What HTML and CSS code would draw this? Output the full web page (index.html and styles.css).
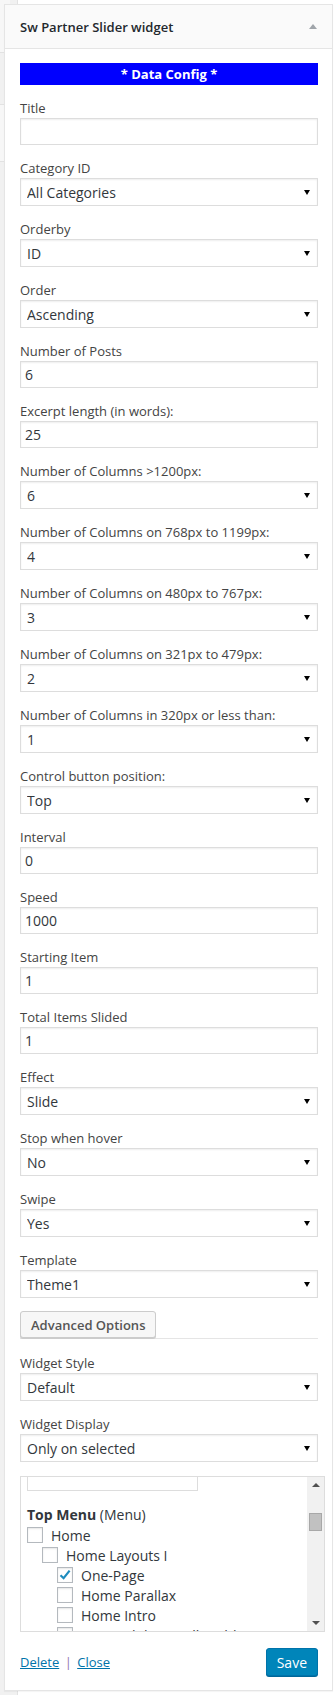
FILE: index.html
```html
<!DOCTYPE html>
<html lang="en">
<head>
    <meta charset="UTF-8">
    <meta name="viewport" content="width=device-width, initial-scale=1.0">
    <title>Sw Partner Slider widget</title>
    <link rel="stylesheet" href="styles.css">
</head>
<body>
    <div class="backdrop"></div>
    <div class="side-box side-box-top"></div>
    <div class="side-box side-box-mid"></div>

    <div class="widget">
        <div class="widget-top">
            <h3 class="widget-title">Sw Partner Slider widget</h3>
            <span class="toggle-arrow"></span>
        </div>

        <div class="widget-inside">
            <div class="data-config">* Data Config *</div>

            <p class="field">
                <label class="field-label">Title</label>
                <input class="text-input" type="text" value="">
            </p>
            <p class="field">
                <label class="field-label">Category ID</label>
                <span class="select-wrap"><select><option>All Categories</option></select></span>
            </p>
            <p class="field">
                <label class="field-label">Orderby</label>
                <span class="select-wrap"><select><option>ID</option></select></span>
            </p>
            <p class="field">
                <label class="field-label">Order</label>
                <span class="select-wrap"><select><option>Ascending</option></select></span>
            </p>
            <p class="field">
                <label class="field-label">Number of Posts</label>
                <input class="text-input" type="text" value="6">
            </p>
            <p class="field">
                <label class="field-label">Excerpt length (in words):</label>
                <input class="text-input" type="text" value="25">
            </p>
            <p class="field">
                <label class="field-label">Number of Columns &gt;1200px:</label>
                <span class="select-wrap"><select><option>6</option></select></span>
            </p>
            <p class="field">
                <label class="field-label">Number of Columns on 768px to 1199px:</label>
                <span class="select-wrap"><select><option>4</option></select></span>
            </p>
            <p class="field">
                <label class="field-label">Number of Columns on 480px to 767px:</label>
                <span class="select-wrap"><select><option>3</option></select></span>
            </p>
            <p class="field">
                <label class="field-label">Number of Columns on 321px to 479px:</label>
                <span class="select-wrap"><select><option>2</option></select></span>
            </p>
            <p class="field">
                <label class="field-label">Number of Columns in 320px or less than:</label>
                <span class="select-wrap"><select><option>1</option></select></span>
            </p>
            <p class="field">
                <label class="field-label">Control button position:</label>
                <span class="select-wrap"><select><option>Top</option></select></span>
            </p>
            <p class="field">
                <label class="field-label">Interval</label>
                <input class="text-input" type="text" value="0">
            </p>
            <p class="field">
                <label class="field-label">Speed</label>
                <input class="text-input" type="text" value="1000">
            </p>
            <p class="field">
                <label class="field-label">Starting Item</label>
                <input class="text-input" type="text" value="1">
            </p>
            <p class="field">
                <label class="field-label">Total Items Slided</label>
                <input class="text-input" type="text" value="1">
            </p>
            <p class="field">
                <label class="field-label">Effect</label>
                <span class="select-wrap"><select><option>Slide</option></select></span>
            </p>
            <p class="field">
                <label class="field-label">Stop when hover</label>
                <span class="select-wrap"><select><option>No</option></select></span>
            </p>
            <p class="field">
                <label class="field-label">Swipe</label>
                <span class="select-wrap"><select><option>Yes</option></select></span>
            </p>
            <p class="field">
                <label class="field-label">Template</label>
                <span class="select-wrap"><select><option>Theme1</option></select></span>
            </p>

            <div class="advanced-bar">
                <button class="button-secondary" type="button">Advanced Options</button>
            </div>

            <p class="field field-spaced">
                <label class="field-label">Widget Style</label>
                <span class="select-wrap"><select><option>Default</option></select></span>
            </p>
            <p class="field">
                <label class="field-label">Widget Display</label>
                <span class="select-wrap"><select><option>Only on selected</option></select></span>
            </p>

            <div class="page-box">
                <div class="page-box-scroll">
                    <input class="search-input" type="text">
                    <div class="menu-title"><strong>Top Menu</strong> (Menu)</div>
                    <ul class="check-list">
                        <li class="lvl-0"><span class="checkbox"></span>Home</li>
                        <li class="lvl-1"><span class="checkbox"></span>Home Layouts I</li>
                        <li class="lvl-2"><span class="checkbox checked"><svg viewBox="0 0 16 16" width="16" height="16"><path d="M3.5 8.2 L6.6 11.2 L12.6 3.6" fill="none" stroke="#1e8cbe" stroke-width="2.2"/></svg></span>One-Page</li>
                        <li class="lvl-2"><span class="checkbox"></span>Home Parallax</li>
                        <li class="lvl-2"><span class="checkbox"></span>Home Intro</li>
                        <li class="lvl-2"><span class="checkbox"></span>Home Slider 1 Full Width</li>
                    </ul>
                </div>
                <div class="scrollbar">
                    <span class="scroll-up"></span>
                    <span class="scroll-thumb"></span>
                    <span class="scroll-down"></span>
                </div>
            </div>

            <div class="widget-actions">
                <div class="action-links">
                    <a href="#">Delete</a>
                    <span class="sep">|</span>
                    <a href="#">Close</a>
                </div>
                <button class="button-primary" type="button">Save</button>
            </div>
        </div>
    </div>
</body>
</html>
```

FILE: styles.css
```css
body {
    margin: 0;
    background: #f1f1f1;
    font-family: "Open Sans", "Noto Sans", sans-serif;
    font-size: 13px;
    color: #444;
    position: relative;
    min-height: 1695px;
}

/* panels peeking out behind the widget */
.backdrop {
    position: absolute;
    top: 0;
    left: 17px;
    right: 0;
    bottom: 0;
    background: #fff;
    border-left: 1px solid #e2e2e2;
}

.side-box {
    position: absolute;
    left: 0;
    width: 10px;
    background: #f7f7f7;
    border-bottom: 1px solid #e2e2e2;
}

.side-box-top {
    top: 0;
    height: 52px;
}

.side-box-mid {
    top: 104px;
    height: 56px;
    border-top: 1px solid #e2e2e2;
}

.widget {
    position: relative;
    margin: 4px 3px 0 4px;
    background: #fff;
    border: 1px solid #e5e5e5;
    box-shadow: 0 1px 1px rgba(0, 0, 0, 0.04);
}

.widget-top {
    display: flex;
    align-items: center;
    justify-content: space-between;
    height: 43px;
    padding: 0 15px;
    background: #fafafa;
    border-bottom: 1px solid #e5e5e5;
}

.widget-title {
    margin: 0;
    font-size: 13px;
    font-weight: 600;
    color: #23282d;
}

.toggle-arrow {
    width: 0;
    height: 0;
    border-left: 4px solid transparent;
    border-right: 4px solid transparent;
    border-bottom: 5px solid #a0a5aa;
}

.widget-inside {
    padding: 14px 14px 14px 15px;
}

.data-config {
    height: 22px;
    line-height: 22px;
    background: #0000ff;
    color: #fff;
    font-weight: bold;
    text-align: center;
}

.field {
    margin: 13px 0 0;
}

.field-label {
    display: block;
    line-height: 20px;
}

.text-input,
.select-wrap select {
    display: block;
    box-sizing: border-box;
    width: 100%;
    margin: 0;
    border: 1px solid #ddd;
    background: #fff;
    box-shadow: inset 0 1px 2px rgba(0, 0, 0, 0.07);
    font-family: inherit;
    font-size: 14px;
    color: #32373c;
    outline: none;
}

.text-input {
    height: 27px;
    padding: 0 4px;
}

.select-wrap {
    display: block;
    position: relative;
}

.select-wrap select {
    height: 28px;
    padding: 0 24px 0 6px;
    -webkit-appearance: none;
    appearance: none;
    border-radius: 0;
}

.select-wrap::after {
    content: "";
    position: absolute;
    right: 8px;
    top: 12px;
    border-left: 3px solid transparent;
    border-right: 3px solid transparent;
    border-top: 5px solid #000;
    pointer-events: none;
}

.advanced-bar {
    margin-top: 13px;
    height: 27px;
    border-bottom: 1px solid #e5e5e5;
}

.button-secondary {
    box-sizing: border-box;
    height: 27px;
    padding: 0 10px;
    background: #f7f7f7;
    border: 1px solid #ccc;
    border-radius: 3px;
    box-shadow: 0 1px 0 #ccc;
    font-family: inherit;
    font-size: 13px;
    font-weight: 600;
    color: #555;
}

.field-spaced {
    margin-top: 14px;
}

.page-box {
    display: flex;
    height: 154px;
    margin: 14px -7px 0 0;
    border: 1px solid #ddd;
    background: #fff;
    font-size: 14px;
}

.page-box-scroll {
    flex: 1;
    overflow: hidden;
    padding: 0 6px;
}

.search-input {
    display: block;
    box-sizing: border-box;
    width: 171px;
    height: 28px;
    margin: -14px 0 0;
    border: 1px solid #ddd;
    outline: none;
}

.menu-title {
    margin-top: 14px;
    line-height: 20px;
    color: #32373c;
}

.check-list {
    list-style: none;
    margin: 0;
    padding: 0;
    color: #32373c;
}

.check-list li {
    display: flex;
    align-items: center;
    height: 20px;
    white-space: nowrap;
}

.lvl-1 {
    padding-left: 15px;
}

.lvl-2 {
    padding-left: 30px;
}

.checkbox {
    box-sizing: border-box;
    width: 16px;
    height: 16px;
    margin-right: 8px;
    border: 1px solid #b4b9be;
    background: #fff;
    box-shadow: inset 0 1px 2px rgba(0, 0, 0, 0.1);
    flex-shrink: 0;
    position: relative;
}

.checkbox svg {
    position: absolute;
    left: -1px;
    top: -1px;
}

.scrollbar {
    width: 17px;
    display: flex;
    flex-direction: column;
    align-items: center;
    background: #f1f1f1;
}

.scroll-up,
.scroll-down {
    width: 0;
    height: 0;
    border-left: 4px solid transparent;
    border-right: 4px solid transparent;
}

.scroll-up {
    margin-top: 6px;
    border-bottom: 4px solid #505050;
}

.scroll-thumb {
    box-sizing: border-box;
    width: 13px;
    height: 18px;
    margin-top: 26px;
    background: #c1c1c1;
    border: 1px solid #a8a8a8;
}

.scroll-down {
    margin-top: auto;
    margin-bottom: 6px;
    border-top: 4px solid #505050;
}

.widget-actions {
    display: flex;
    align-items: center;
    justify-content: space-between;
    margin-top: 16px;
}

.action-links a {
    color: #0073aa;
    text-decoration: underline;
}

.sep {
    color: #9178b0;
    margin: 0 2px;
}

.button-primary {
    box-sizing: border-box;
    height: 28px;
    padding: 0 10px;
    background: #0085ba;
    border: 1px solid #0073aa;
    border-radius: 3px;
    box-shadow: 0 1px 0 #006799;
    font-family: inherit;
    font-size: 14px;
    color: #fff;
}
```
